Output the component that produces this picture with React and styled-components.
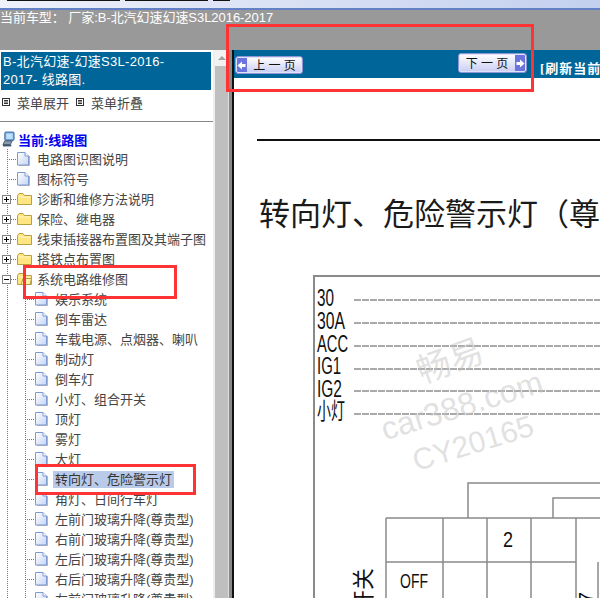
import React from "react";
import styled, { createGlobalStyle } from "styled-components";

const Global = createGlobalStyle`
  html, body { margin: 0; padding: 0; height: 598px; overflow: hidden; background: #fff; }
  * { box-sizing: border-box; }
  body { font-family: "Liberation Sans", "Noto Sans CJK SC", sans-serif; font-size: 13px; }
`;

const Page = styled.div`
  position: relative; width: 600px; height: 598px; overflow: hidden;
  display: flex; flex-direction: column;
`;
const Chrome = styled.div`
  height: 10px; flex: none; display: flex; gap: 5px; padding-left: 7px;
  background: linear-gradient(to right, #eef0fb, #c3d0ee);
  border-bottom: 2px solid #6480c4;
`;
const TabEdge = styled.span`
  width: ${p => p.$w}px; height: 1px; background: #111;
`;
const Header = styled.div`
  height: 40px; flex: none; background: #999; color: #fff;
  font-size: 13px; line-height: 16px; white-space: nowrap; letter-spacing: -0.05px;
`;
const Body = styled.div`
  flex: 1; min-height: 0; display: flex;
`;
const Sidebar = styled.aside`
  width: 213px; flex: none; overflow: hidden; background: #fff;
`;
const TitleBox = styled.div`
  width: 210px; height: 38px; margin: 2px 0 0 1px; padding: 1px 2px;
  background: #006699; color: #fff; font-size: 13px; line-height: 18px; letter-spacing: 0.3px;
`;
const MenuBar = styled.div`
  height: 18px; margin-top: 3px; display: flex; align-items: center; color: #444; padding-left: 2px;
`;
const MenuGlyph = styled.svg`
  width: 8px; height: 8px; flex: none; margin-right: 7px;
`;
const MenuLabel = styled.span`
  margin-right: 7px;
`;
const Separator = styled.div`
  height: 1px; margin-top: 10px; background: #888;
`;
const Tree = styled.div`
  margin-top: 7px; display: flex; flex-direction: column;
`;
const Row = styled.div`
  height: 20px; flex: none; display: flex; align-items: center; white-space: nowrap; color: #444;
`;
const dots = "repeating-linear-gradient(to bottom, #777 0 1px, transparent 1px 2px)";
const hdots = "repeating-linear-gradient(to right, #777 0 1px, transparent 1px 2px)";
const Guide = styled.span`
  width: ${p => p.$w}px; height: 20px; flex: none; display: flex; align-items: center; padding-left: 2px;
  background-image: ${p => p.$branch ? `${hdots}, ${dots}` : dots};
  background-repeat: no-repeat;
  background-size: ${p => p.$branch ? `${p.$w - p.$at}px 1px, 1px 100%` : "1px 100%"};
  background-position: ${p => p.$branch ? `${p.$at}px 10px, ${p.$at}px 0` : `${p.$at}px 0`};
`;
const RootIndent = styled.span`
  width: 2px; flex: none;
`;
const IconSlot = styled.span`
  width: 20px; height: 20px; flex: none; display: flex; align-items: center;
`;
const RootLabel = styled.span`
  color: #0000ee; font-weight: 700; margin-left: -4px;
`;
const Label = styled.span`
  height: 17px; line-height: 17px;
  ${p => p.$selected && "background: #b9cbe8; margin-left: -2px; padding: 0 2px; color: #333;"}
`;
const Scrollbar = styled.div`
  width: 15px; flex: none; display: flex; flex-direction: column; border-left: 2px solid #eee;
`;
const ScrollArrow = styled.div`
  height: 16px; flex: none; background: #f2f2f2; display: flex; align-items: center; justify-content: center;
`;
const ScrollThumb = styled.div`
  flex: 1; background: #bfbfbf;
`;
const Divider = styled.div`
  width: 6px; flex: none;
  background: linear-gradient(to right, #ddd 0 1px, #888 1px 4px, #111 4px 6px);
`;
const Content = styled.main`
  flex: 1; min-width: 0; overflow: hidden; display: flex; flex-direction: column;
`;
const NavBar = styled.div`
  height: 28px; flex: none; background: #006699; display: flex; align-items: flex-start;
  padding-left: 1px; white-space: nowrap; overflow: hidden;
`;
const PageButton = styled.button`
  flex: none; width: ${p => p.$next ? 69 : 68}px; height: ${p => p.$next ? 20 : 18}px;
  margin: ${p => p.$next ? "3px 0 0 155px" : "6px 0 0 0"};
  padding: 0; border: 1px solid #8f96d6; border-radius: 3px; outline: 1px solid #dfe2f8; outline-offset: -2px;
  background: linear-gradient(to bottom, #ffffff, #c9cdf3);
  display: flex; align-items: center; color: #111;
  font: 12px "Liberation Sans", "Noto Sans CJK SC", sans-serif;
  flex-direction: ${p => p.$next ? "row-reverse" : "row"};
`;
const ArrowCap = styled.span`
  width: 11px; align-self: stretch; flex: none; background: #6a74dc;
  display: flex; align-items: center; justify-content: center;
`;
const ButtonText = styled.span`
  flex: 1; text-align: center; padding-bottom: 1px;
`;
const Refresh = styled.span`
  margin: 8px 0 0 13px; color: #fff; font-weight: 700; font-size: 13px; letter-spacing: 1px;
  font-family: "Liberation Serif", "Noto Sans CJK SC", serif;
`;
const Sheet = styled.div`
  flex: 1; min-height: 0; overflow: hidden; background: #fff;
`;
const Rule = styled.div`
  height: 2px; margin: 61px 0 0 23px; background: #111;
`;
const DocTitle = styled.h1`
  margin: 54px 0 0 25px; font-size: 31px; line-height: 40px; font-weight: 400; color: #1a1a1a;
  white-space: nowrap;
`;
const Diagram = styled.svg`
  display: block; width: 287px; height: 323px; margin: 40px 0 0 79px;
`;
const Annotation = styled.div`
  position: absolute; left: ${p => p.$x}px; top: ${p => p.$y}px; width: ${p => p.$w}px; height: ${p => p.$h}px;
  border: 3px solid #ff3333; pointer-events: none;
`;

const PageIcon = () => (
  <svg width="13" height="15" viewBox="0 0 13 15">
    <defs>
      <linearGradient id="pg" x1="0" y1="0" x2="1" y2="1">
        <stop offset="0" stopColor="#ffffff" />
        <stop offset="1" stopColor="#c5d6f4" />
      </linearGradient>
    </defs>
    <path d="M2 13.5H12.5V4" fill="none" stroke="#b5b5b5" />
    <path d="M0.5 0.5H8L11.5 4V13H0.5Z" fill="url(#pg)" stroke="#7f9ad2" />
    <path d="M8 0.5V4H11.5" fill="#fff" stroke="#7f9ad2" />
  </svg>
);
const FolderIcon = ({ open }) => (
  <svg width="15" height="12" viewBox="0 0 15 12">
    <path d="M0.5 2.5L2 0.5H6L7.5 2.5H14.5V11.5H0.5Z" fill="#ffe680" stroke="#b89f3f" />
    <path d="M1.5 4H13.5" stroke="#fff6c8" />
    {open && <path d="M4 11.5L6 5.5H14.5L13 11.5Z" fill="#fff2b0" stroke="#b89f3f" />}
  </svg>
);
const ComputerIcon = () => (
  <svg width="13" height="16" viewBox="0 0 14 16">
    <rect x="3" y="0.5" width="10" height="9" rx="1" fill="#6fa3dc" stroke="#3a6ea8" />
    <rect x="4.5" y="2" width="7" height="6" fill="#bfe0fa" />
    <path d="M3 10L1 14H9L11 10Z" fill="#8a9bb0" stroke="#4a5a70" />
    <rect x="1" y="14" width="9" height="2" fill="#3f566e" />
  </svg>
);
const Expander = ({ open }) => (
  <svg width="9" height="9" viewBox="0 0 9 9">
    <rect x="0.5" y="0.5" width="8" height="8" fill="#fff" stroke="#808080" />
    <path d="M2 4.5H7" stroke="#000" />
    {!open && <path d="M4.5 2V7" stroke="#000" />}
  </svg>
);
const MenuIcon = () => (
  <MenuGlyph viewBox="0 0 8 8">
    <rect x="0.5" y="0.5" width="7" height="7" fill="#fff" stroke="#333" />
    <path d="M2 2.5H6M2 4H6M2 5.5H6" stroke="#333" />
  </MenuGlyph>
);
const Arrow = ({ next }) => (
  <svg width="9" height="9" viewBox="0 0 9 9">
    <path d={next ? "M0.5 3H4V0.5L8.5 4.5L4 8.5V6H0.5Z" : "M8.5 3H5V0.5L0.5 4.5L5 8.5V6H8.5Z"} fill="#fff" />
  </svg>
);

const topItems = [
  { text: "电路图识图说明", kind: "page" },
  { text: "图标符号", kind: "page" },
  { text: "诊断和维修方法说明", kind: "closed" },
  { text: "保险、继电器", kind: "closed" },
  { text: "线束插接器布置图及其端子图", kind: "closed" },
  { text: "搭铁点布置图", kind: "closed" },
  { text: "系统电路维修图", kind: "open" },
];
const subItems = [
  "娱乐系统", "倒车雷达", "车载电源、点烟器、喇叭", "制动灯", "倒车灯", "小灯、组合开关", "顶灯", "雾灯", "大灯",
  "转向灯、危险警示灯", "角灯、日间行车灯", "左前门玻璃升降(尊贵型)", "右前门玻璃升降(尊贵型)",
  "左后门玻璃升降(尊贵型)", "右后门玻璃升降(尊贵型)", "左前门玻璃升降(尊贵型)",
];
const rails = [
  { t: "30", y: 306, l: 17 }, { t: "30A", y: 329, l: 28 }, { t: "ACC", y: 352, l: 31 },
  { t: "IG1", y: 374, l: 24 }, { t: "IG2", y: 397, l: 25 }, { t: "小灯", y: 419, l: 28 },
];
const railLines = [300, 323, 346, 369, 391, 414];
const tableX = [386, 443, 487, 531, 576];
const sans = '"Liberation Sans", "Noto Sans CJK SC", sans-serif';

export default function App() {
  return (
    <Page>
      <Global />
      <Chrome>
        <TabEdge $w={113} />
        <TabEdge $w={83} />
        <TabEdge $w={17} />
      </Chrome>
      <Header>当前车型： 厂家:B-北汽幻速幻速S3L2016-2017</Header>
      <Body>
        <Sidebar>
          <TitleBox>B-北汽幻速-幻速S3L-2016-<br />2017- 线路图.</TitleBox>
          <MenuBar>
            <MenuIcon /><MenuLabel>菜单展开</MenuLabel>
            <MenuIcon /><MenuLabel>菜单折叠</MenuLabel>
          </MenuBar>
          <Separator />
          <Tree>
            <Row>
              <RootIndent />
              <IconSlot><ComputerIcon /></IconSlot>
              <RootLabel>当前:线路图</RootLabel>
            </Row>
            {topItems.map(item => (
              <Row key={item.text}>
                <Guide $w={17} $at={7} $branch>
                  {item.kind !== "page" && <Expander open={item.kind === "open"} />}
                </Guide>
                <IconSlot>
                  {item.kind === "page" ? <PageIcon /> : <FolderIcon open={item.kind === "open"} />}
                </IconSlot>
                <Label>{item.text}</Label>
              </Row>
            ))}
            {subItems.map((text, i) => (
              <Row key={i}>
                <Guide $w={17} $at={7} />
                <Guide $w={18} $at={8} $branch />
                <IconSlot><PageIcon /></IconSlot>
                <Label $selected={text === "转向灯、危险警示灯"}>{text}</Label>
              </Row>
            ))}
          </Tree>
        </Sidebar>
        <Scrollbar>
          <ScrollArrow>
            <svg width="8" height="4" viewBox="0 0 8 4"><path d="M4 0L8 4H0Z" fill="#a0a0a0" /></svg>
          </ScrollArrow>
          <ScrollThumb />
        </Scrollbar>
        <Divider />
        <Content>
          <NavBar>
            <PageButton>
              <ArrowCap><Arrow /></ArrowCap>
              <ButtonText>上 一 页</ButtonText>
            </PageButton>
            <PageButton $next>
              <ArrowCap><Arrow next /></ArrowCap>
              <ButtonText>下 一 页</ButtonText>
            </PageButton>
            <Refresh>[刷新当前页]</Refresh>
          </NavBar>
          <Sheet>
            <Rule />
            <DocTitle>转向灯、危险警示灯（尊贵型）</DocTitle>
            <Diagram viewBox="313 275 287 323" fontFamily={sans} fill="#111">
              <path d="M600 276H314V598" fill="none" stroke="#8a8a8a" strokeWidth="2" />
              {rails.map(r => (
                <text key={r.t} x="317" y={r.y} fontSize="23" textLength={r.l} lengthAdjust="spacingAndGlyphs">{r.t}</text>
              ))}
              {railLines.map(y => (
                <path key={y} d={`M354 ${y}H600`} stroke="#555" strokeWidth="1" strokeDasharray="7 1" />
              ))}
              <path d="M468 518V483H600M553 518V498H600" fill="none" stroke="#8a8a8a" strokeWidth="1.5" />
              <path d="M386 518H600M386 562H576M598 562V598" fill="none" stroke="#8a8a8a" strokeWidth="1.5" />
              {tableX.map(x => (
                <path key={x} d={`M${x} 518V598`} stroke="#8a8a8a" strokeWidth="1.5" />
              ))}
              <text x="503" y="547" fontSize="22" textLength="10" lengthAdjust="spacingAndGlyphs">2</text>
              <text x="400" y="588" fontSize="21" textLength="28" lengthAdjust="spacingAndGlyphs">OFF</text>
              <text transform="translate(371 568) rotate(-90)" fontSize="22" textAnchor="end">开关</text>
              <text transform="translate(594 604) rotate(-90)" fontSize="22">7</text>
              <g fill="#c4c4c4" fillOpacity="0.5" textAnchor="middle">
                <text transform="translate(454 372) rotate(-20)" fontSize="34">畅易</text>
                <text transform="translate(465 416) rotate(-17)" fontSize="32">car388.com</text>
                <text transform="translate(476 453) rotate(-17)" fontSize="30">CY20165</text>
              </g>
            </Diagram>
          </Sheet>
        </Content>
      </Body>
      <Annotation $x={226} $y={24} $w={308} $h={68} />
      <Annotation $x={23} $y={265} $w={154} $h={34} />
      <Annotation $x={35} $y={464} $w={161} $h={31} />
    </Page>
  );
}
